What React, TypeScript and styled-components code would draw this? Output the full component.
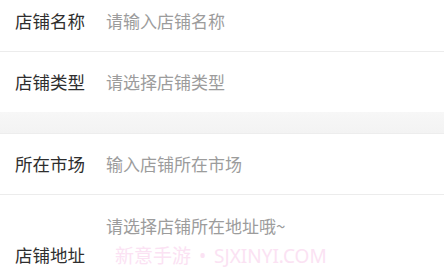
import styled, { createGlobalStyle } from "styled-components"

const GlobalStyle = createGlobalStyle`
    html, body {
        margin: 0;
        padding: 0;
        background: #ffffff;
        overflow: hidden;
    }
    body {
        font-family: "Noto Sans CJK SC", "Noto Sans", sans-serif;
    }
`

const Page = styled.div`
    position: relative;
    width: 444px;
    height: 279px;
    overflow: hidden;
    background: #ffffff;
`

const List = styled.div`
    display: flex;
    flex-direction: column;
    margin-top: -9px;
`

const Row = styled.div<{ $last?: boolean }>`
    display: flex;
    align-items: center;
    height: 60px;
    padding: 0 15px;
    background: #ffffff;
    border-bottom: ${(p) => (p.$last ? "none" : "1px solid #ececec")};
`

const AreaRow = styled.div`
    display: flex;
    align-items: flex-start;
    height: 120px;
    padding: 0 15px;
    background: #ffffff;
`

const Label = styled.div<{ $offset?: number }>`
    width: 91px;
    flex-shrink: 0;
    font-size: 17.5px;
    line-height: 22px;
    color: #2e2e2e;
    padding-top: ${(p) => p.$offset ?? 0}px;
`

const Placeholder = styled.div<{ $offset?: number }>`
    font-size: 17px;
    line-height: 22px;
    color: #9c9c9c;
    padding-top: ${(p) => p.$offset ?? 0}px;
`

const Gap = styled.div`
    height: 21px;
    background: linear-gradient(#f7f7f7, #f3f3f3);
    border-bottom: 1px solid #ededed;
`

const Watermark = styled.div`
    position: absolute;
    left: 115px;
    top: 244px;
    font-family: "Noto Sans", "Noto Sans CJK SC", sans-serif;
    font-size: 19px;
    line-height: 24px;
    word-spacing: 3px;
    color: #fbe2f3;
    white-space: nowrap;
    pointer-events: none;
`

const App = () => {
    return (
        <Page>
            <GlobalStyle />
            <List>
                <Row>
                    <Label>店铺名称</Label>
                    <Placeholder>请输入店铺名称</Placeholder>
                </Row>
                <Row $last>
                    <Label>店铺类型</Label>
                    <Placeholder>请选择店铺类型</Placeholder>
                </Row>
                <Gap />
                <Row>
                    <Label>所在市场</Label>
                    <Placeholder>输入店铺所在市场</Placeholder>
                </Row>
                <AreaRow>
                    <Label $offset={49}>店铺地址</Label>
                    <Placeholder $offset={20}>请选择店铺所在地址哦~</Placeholder>
                </AreaRow>
            </List>
            <Watermark>新意手游 • SJXINYI.COM</Watermark>
        </Page>
    )
}

export default App
